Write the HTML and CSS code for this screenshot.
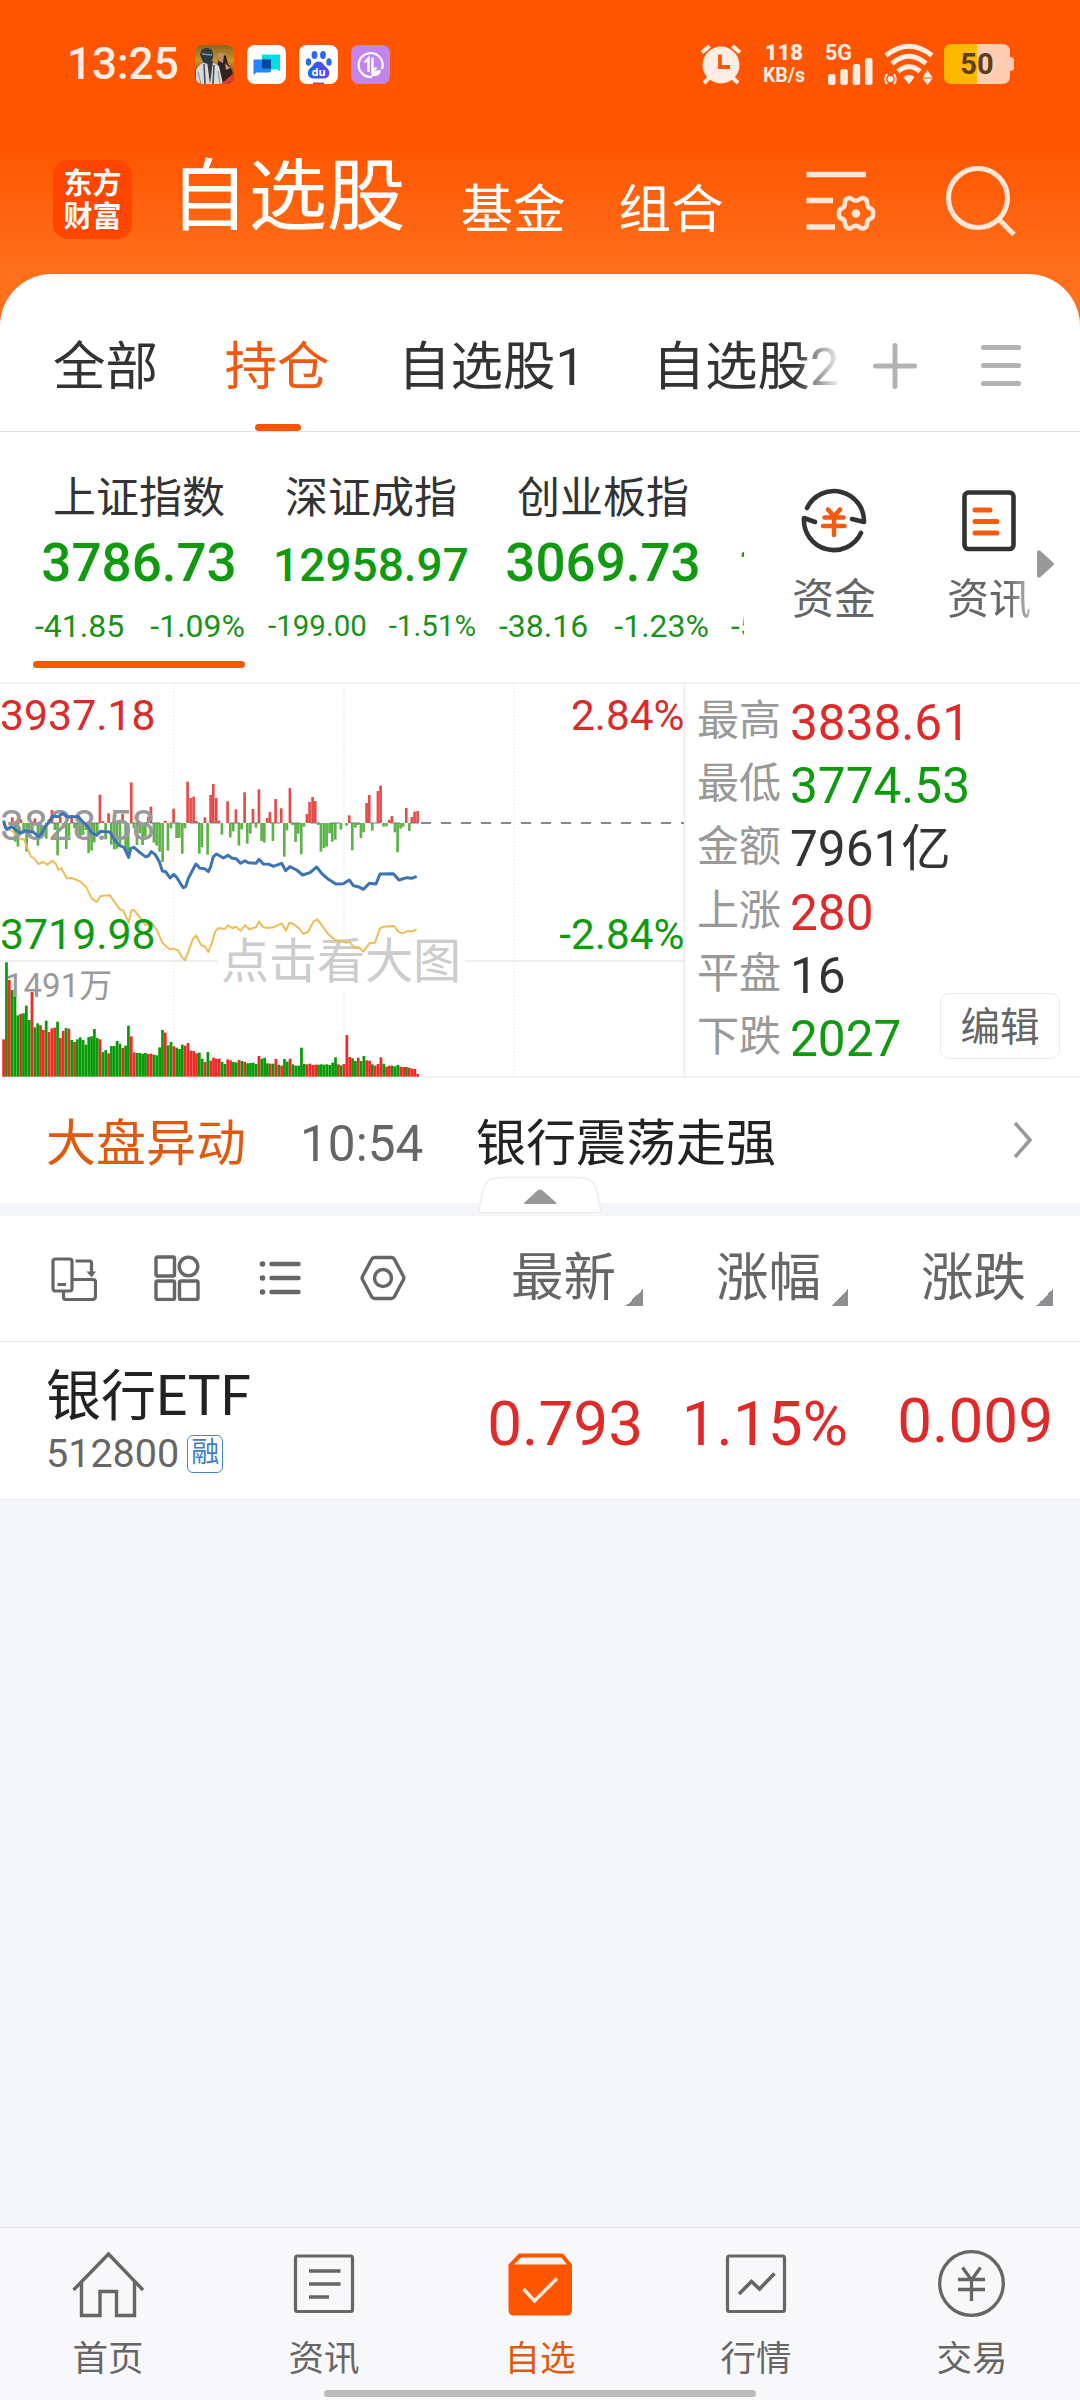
FILE: index.html
```html
<!DOCTYPE html>
<html lang="zh-CN">
<head>
<meta charset="utf-8">
<title>自选股</title>
<link rel="stylesheet" href="styles.css">
</head>
<body>
<div class="app">
  <header class="hero">
    <div class="status">
      <span class="clock">13:25</span>
      <div class="status-apps">
        <svg width="39" height="39" viewBox="0 0 39 39"><defs><clipPath id="r"><rect width="39" height="39" rx="8"/></clipPath><linearGradient id="gold" x1="0" y1="0" x2="0" y2="1"><stop offset="0" stop-color="#8a6420"/><stop offset=".4" stop-color="#c9942e"/><stop offset="1" stop-color="#3a2a1c"/></linearGradient></defs><g clip-path="url(#r)"><rect width="39" height="39" fill="url(#gold)"/><path d="M21 39l1-18 3-12 6 2 2 8 4 6 2 14z" fill="#33221b"/><path d="M23 9q4-4 6 1l-1 8-4-2z" fill="#c58b66"/><path d="M30 18l5 5-4 2z" fill="#d09a74"/><path d="M1 39V25q4-7 10-8 8 0 13 4l4 18z" fill="#d8dadc"/><path d="M9 19l1 20M19 20l-1 19" stroke="#4c5257" stroke-width="1.6"/><path d="M3 27l3 12M23 26l2 13" stroke="#868c90"/><path d="M12 16l3 23 3-23z" fill="#3a3a3c"/><path d="M5 10q1-8 8-7 6 1 5 10l-2 5q-5 2-8-1z" fill="#2f3a43"/><path d="M7 9l10 1" stroke="#8493a0" stroke-width="1.5"/><path d="M26 39l13-11v11z" fill="#e03a34"/></g></svg>
        <svg width="39" height="39" viewBox="0 0 39 39"><rect width="39" height="39" rx="8" fill="#fff"/><path d="M16 9.500h16q1 0 1 1V26l-3-1.500H16q-1 0-1-1v-13q0-1 1-1z" fill="#00dfe0"/><path d="M7 14.500h17v11q0 2-2 2H9.500L6.500 30V15q0-.5.5-.5z" fill="#1f86ff"/><path d="M15 14.500h9v9h-8q-1 0-1-1z" fill="#024696"/></svg>
        <svg width="39" height="39" viewBox="0 0 39 39"><defs><linearGradient id="du" x1="0" x2="1"><stop offset="0" stop-color="#1667f5"/><stop offset="1" stop-color="#6b42e8"/></linearGradient></defs><rect width="39" height="39" rx="8" fill="#fff"/><g fill="#2a69ec"><ellipse cx="15.500" cy="10" rx="2.900" ry="4"/><ellipse cx="24" cy="10" rx="2.900" ry="4"/><ellipse cx="9.500" cy="17" rx="2.700" ry="3.800"/><ellipse cx="30" cy="17" rx="2.700" ry="3.800"/></g><path d="M19.500 16.500c4 0 5 3.500 8 6 4 3 4.500 11-3 11H15c-7.500 0-7.500-8-3-11 3-2.500 3.500-6 7.500-6z" fill="url(#du)"/><text x="19.500" y="31" class="du">du</text><path d="M14 37.500h6V39h-6z" fill="#e33"/><path d="M20 37.500h5V39h-5z" fill="#36e"/></svg>
        <svg width="39" height="39" viewBox="0 0 39 39"><rect width="39" height="39" rx="8" fill="#c385eb"/><g fill="none" stroke="#fff" stroke-width="2.200"><path d="M21 32A12 12 0 1 1 31 24"/><path d="M13.500 17.500l4-4V27M21.500 12.500V26.500l4-4" stroke-width="2.400"/></g><path d="M20 32q0-7 10-7-1 7-8 6z" fill="#fff"/></svg>
      </div>
      <div class="status-sys">
        <svg width="42" height="42" viewBox="0 0 42 42"><g fill="none" stroke="#ffede4" stroke-width="4"><path d="M2 9.500L9.500 3M40 9.500L32.500 3M9 35l-5 5M33 35l5 5"/></g><circle cx="21" cy="22" r="18.500" fill="#ffede4"/><path d="M20 11.500V24h10" fill="none" stroke="#ff5500" stroke-width="3.800"/></svg>
        <div class="rate"><b>118</b><span>KB/s</span></div>
        <svg class="signal" width="50" height="50" viewBox="0 -4 50 50"><text x="-1" y="17" class="g5">5G</text><g fill="#ffede4"><rect x="2" y="31" width="7.500" height="11" rx="2.500"/><rect x="14.300" y="26" width="7.500" height="16" rx="2.500"/><rect x="26.700" y="21" width="7.500" height="21" rx="2.500"/><rect x="39" y="15" width="7.500" height="27" rx="2.500"/></g></svg>
        <svg class="wifi" width="50" height="42" viewBox="0 0 50 42"><g fill="none" stroke="#ffede4" stroke-width="5"><path d="M2 12.500Q25-6 48 12.500"/><path d="M8 20.500Q25 6 42 20.500"/><path d="M14 28.500Q25 19 36 28.500"/></g><path d="M19.500 34q5.500-4 11 0L25 41.500z" fill="#ffede4"/><path d="M38.500 34.500L43.500 27l5 7.500zM38.500 35.500h10L43.500 42z" fill="#ffede4"/><circle cx="6.500" cy="36" r="3" fill="#ffede4"/><path d="M3 31q-3.500 5 0 10M10 31q3.500 5 0 10" fill="none" stroke="#ffede4" stroke-width="2"/></svg>
        <svg width="70" height="40" viewBox="0 0 70 40"><path d="M8 0h25v40H8q-8 0-8-8V8q0-8 8-8z" fill="#ffb800"/><path d="M33 0h25q8 0 8 8v5q4 0 4 3v8q0 3-4 3v5q0 8-8 8H33z" fill="#ffcdb3"/><text x="33" y="30" class="battery">50</text></svg>
      </div>
    </div>
    <div class="topbar">
      <div class="logo">东方<br>财富</div>
      <nav class="sections"><span class="current">自选股</span><span>基金</span><span>组合</span></nav>
      <svg width="70" height="62" viewBox="806 168 70 62"><g fill="none" stroke="#ffe6d6" stroke-width="5.300"><path d="M806.500 173.500H866M806.500 199.500H833M806.500 226H835"/><path d="M847.500 197.500q2.500-1.500 5 1 3.500 2.500 7 0 2.500-2.500 5-1 3 1.500 2.500 4.500 0 4.500 3.500 5.500 3 1.500 2.500 5 .5 4-2.500 5-3.500 1-3.500 5 .5 3-2.500 4.500t-5-1q-3.500-2.500-7 0-2.500 2.500-5 1t-2.500-4.500q0-4-3.500-5-3-1-2.500-5-.5-3.500 2.500-5 3.500-1 3.500-5.500-.5-3 2.500-4.500z" stroke-width="4.500"/></g><circle cx="856" cy="212.500" r="4.200" fill="#ffe6d6"/></svg>
      <svg width="70" height="72" viewBox="946 162 70 72"><g fill="none" stroke="#ffe6d6" stroke-width="5"><circle cx="978" cy="196" r="29.500"/><path d="M998.500 217L1014 232.500"/></g></svg>
    </div>
  </header>

  <main class="sheet">
    <div class="tabs">
      <div class="tab-list"><span>全部</span><span class="on">持仓</span><span>自选股1</span><span>自选股2</span></div>
      <svg width="44" height="46" viewBox="0 0 44 46"><path d="M2.500 23H41.500M22 2.500V43.500" stroke="#b3b3b3" stroke-width="5" stroke-linecap="round"/></svg>
      <svg width="40" height="46" viewBox="0 0 40 46"><path d="M2.500 4.500H37.500M2.500 22.500H37.500M2.500 40.500H37.500" stroke="#b3b3b3" stroke-width="5.200" stroke-linecap="round"/></svg>
    </div>

    <section class="market">
      <div class="indices">
        <div class="index on"><span class="name">上证指数</span><span class="price">3786.73</span><span class="delta"><i>-41.85</i><i>-1.09%</i></span></div>
        <div class="index long"><span class="name">深证成指</span><span class="price"><b>12958.97</b></span><span class="delta"><i>-199.00</i><i>-1.51%</i></span></div>
        <div class="index"><span class="name">创业板指</span><span class="price">3069.73</span><span class="delta"><i>-38.16</i><i>-1.23%</i></span></div>
        <div class="index cut"><span class="name"></span><span class="price"><b>1</b></span><span class="delta"><i>-5</i></span></div>
      </div>
      <div class="shortcuts">
        <div class="shortcut"><svg width="66" height="66" viewBox="0 0 66 66"><g fill="none" stroke="#333" stroke-width="4.600" stroke-linecap="round" stroke-linejoin="round"><path d="M6 21A30 30 0 0 1 63 35L51 32"/><path d="M60 46A30 30 0 0 1 3 31L14 35"/></g><g stroke="#f55a10" stroke-width="4.500" stroke-linecap="round"><path d="M27 22.500l6 7 6-7M23.500 30.500H42.500M22 39H43.500M33 30V48" fill="none"/></g></svg><span>资金</span></div>
        <div class="shortcut last"><svg width="54" height="66" viewBox="0 0 54 66"><rect x="2.500" y="5.500" width="49" height="56.500" rx="4" fill="none" stroke="#333" stroke-width="4.600"/><path d="M13 23H28M13 34.500H35M13 46H35" stroke="#f55a10" stroke-width="5" stroke-linecap="round"/></svg><span>资讯</span></div>
        <svg class="more" width="17" height="28" viewBox="0 0 17 28"><path d="M0 2.500Q0-1 3.500 1L16 12.500q2 1.500 0 3L3.500 27Q0 29 0 25.500z" fill="#999"/></svg>
      </div>
    </section>

    <section class="quote">
      <svg class="chart" id="chart" width="686" height="393" viewBox="0 684 686 393">
        <g stroke="#eeeeef" stroke-width="1.500" fill="none"><path d="M174 684V1077M344 684V1077M514 684V1077" stroke-dasharray="1.500 2"/><path d="M0 961H684M684.500 683V1077" stroke-width="2"/></g>
        <rect x="217" y="935" width="248" height="55" fill="#fff"/>
        <path d="M421 823H684" stroke="#888" stroke-width="1.800" stroke-dasharray="10 10"/>
        <text x="221" y="978" class="t-mark">点击看大图</text>
        <g id="plot" transform="translate(0 670) scale(.33333)"></g>
        <text x="5" y="996.500" class="t-vol">1491万</text>
        <g class="t-axis"><text x="0" y="730" class="up">3937.18</text><text x="0" y="839.500" class="flat">3828.58</text><text x="0" y="948.500" class="down">3719.98</text><text x="684.500" y="730" class="up end">2.84%</text><text x="684.500" y="948.500" class="down end">-2.84%</text></g>
        <g id="lines" transform="translate(0 670) scale(.33333)"></g>
      </svg>
      <dl class="stats">
        <div><dt>最高</dt><dd class="up">3838.61</dd></div>
        <div><dt>最低</dt><dd class="down">3774.53</dd></div>
        <div><dt>金额</dt><dd>7961亿</dd></div>
        <div><dt>上涨</dt><dd class="up">280</dd></div>
        <div><dt>平盘</dt><dd>16</dd></div>
        <div><dt>下跌</dt><dd class="down">2027</dd></div>
        <button class="edit">编辑</button>
      </dl>
    </section>

    <section class="alert">
      <span class="kind">大盘异动</span><span class="time">10:54</span><span class="what">银行震荡走强</span>
      <svg width="20" height="38" viewBox="0 0 20 38"><path d="M2 2L17 19 2 36" fill="none" stroke="#999" stroke-width="3.600"/></svg>
      <svg class="fold" width="126" height="38" viewBox="0 0 126 38"><path d="M1.500 36.500L5.500 16Q8 1.500 24 1.500H102Q117 1.500 120 16L124.500 36.500z" fill="#fff" stroke="#ededf0" stroke-width="1.500"/><path d="M47.500 28q-1-1 .5-2L60.500 14.500q2.500-2 5 0L78.500 26q1.500 1.500 .5 2z" fill="#999"/></svg>
    </section>

    <section class="columns">
      <div class="tools">
        <svg width="46" height="46" viewBox="0 0 46 46"><g fill="none" stroke="#666" stroke-width="3.200"><rect x="2" y="4" width="19" height="32" rx="2.500"/><path d="M6.500 29.500H15M24.500 6H38.500q2 0 2 2V18M21 24.500H42q2.500 0 2.500 2.500V41q0 3.500-3.500 3.500H15q-2.500 0-2.500-2.500V36"/></g><path d="M35.500 16.500h9.500L40.500 22.500z" fill="#666"/></svg>
        <svg width="46" height="46" viewBox="0 0 46 46"><g fill="none" stroke="#666" stroke-width="3.400"><rect x="2" y="2" width="18.500" height="19" rx="1.500"/><circle cx="34.500" cy="11.500" r="9.300"/><rect x="2" y="26" width="18.500" height="18.500" rx="1.500"/><rect x="25.500" y="26" width="18.500" height="18.500" rx="1.500"/></g></svg>
        <svg width="46" height="46" viewBox="-2.500 0 46 46"><path d="M12 9H39M12 23H39M12 37H39" stroke="#666" stroke-width="4.500" stroke-linecap="round"/><g fill="#666"><circle cx="3" cy="9" r="2.800"/><circle cx="3" cy="23" r="2.800"/><circle cx="3" cy="37" r="2.800"/></g></svg>
        <svg width="46" height="46" viewBox="0 0 46 46"><g fill="none" stroke="#666" stroke-width="3.400"><path d="M14.500 2.500H31.500Q33.500 2.500 34.500 4.500L43.500 21.500Q44.300 23 43.500 24.500L34.500 41.500Q33.500 43.500 31.500 43.500H14.500Q12.500 43.500 11.500 41.500L2.500 24.500Q1.700 23 2.500 21.500L11.500 4.500Q12.500 2.500 14.500 2.500z"/><circle cx="23" cy="23" r="8.500"/></g></svg>
      </div>
      <span class="sort">最新</span><span class="sort">涨幅</span><span class="sort">涨跌</span>
    </section>

    <section class="stock">
      <div class="ident"><span class="title">银行ETF</span><span class="code">512800<em>融</em></span></div>
      <span class="val">0.793</span><span class="val">1.15%</span><span class="val high">0.009</span>
    </section>
  </main>

  <footer class="nav">
    <div class="item"><svg width="72" height="70" viewBox="72 2250 72 70"><path d="M73.500 2290L108.500 2254 143 2290M81.500 2282V2315.500H100V2291.500H116.500V2315.500H134.500V2282" fill="none" stroke="#666" stroke-width="3.400"/></svg><span>首页</span></div>
    <div class="item"><svg width="72" height="70" viewBox="288 2250 72 70"><rect x="295.500" y="2256" width="57" height="55.500" rx="2" fill="none" stroke="#666" stroke-width="3.200"/><path d="M309 2271H340.500M309 2284H340.500M309 2297H329" stroke="#666" stroke-width="3.400"/></svg><span>资讯</span></div>
    <div class="item on"><svg width="72" height="70" viewBox="504 2250 72 70"><path d="M519 2253.500H563L572 2264.500V2310q0 5.500-5.500 5.500H514q-5.500 0-5.500-5.500V2264.500z" fill="#ff5500"/><path d="M521 2257.500H561.500L567 2264.500H514z" fill="#fdf3ee"/><path d="M523.500 2289L534.500 2301 557 2278.500" fill="none" stroke="#ffe9dd" stroke-width="3.500"/></svg><span>自选</span></div>
    <div class="item"><svg width="72" height="70" viewBox="720 2250 72 70"><rect x="727.500" y="2256" width="57" height="55.500" rx="2" fill="none" stroke="#666" stroke-width="3.200"/><path d="M739 2294L751.500 2281.500 759.500 2289 774.500 2273.500" fill="none" stroke="#666" stroke-width="3.600"/></svg><span>行情</span></div>
    <div class="item"><svg width="72" height="70" viewBox="936 2250 72 70"><g fill="none" stroke="#666" stroke-width="3.300"><circle cx="971.500" cy="2283.500" r="31.800"/><path d="M962.500 2267.500L971.500 2280 980.500 2267.500M958 2279.500H985M958 2289.500H985M971.500 2279V2301"/></g></svg><span>交易</span></div>
    <i class="gesture"></i>
  </footer>
</div>
<script src="chart.js"></script>
</body>
</html>
```
FILE: styles.css
```css
* { box-sizing: border-box; }
body { margin: 0; font-family: Roboto, "Noto Sans CJK SC", sans-serif; color: #333; background: #f6f7fa; }
svg { display: block; flex: none; }
i, em { font-style: normal; }
.app { width: 1080px; height: 2400px; display: flex; flex-direction: column; overflow: hidden; }
.up { color: #e02a2a; fill: #d92b2b; }
.down { color: #109a10; fill: #109a10; }
.flat { fill: #999; }

.hero { height: 334px; flex: none; background: linear-gradient(#ff5500 0, #ff5500 145px, #ff6e1a 265px, #ff6e1a 100%); }
.status { height: 128px; padding: 0 66px 0 66px; display: flex; align-items: center; color: #ffede4; }
.clock { font-size: 44px; font-weight: 500; line-height: 50px; width: 129px; padding-left: 1px; }
.status-apps { display: flex; gap: 13px; }
.du { font: 700 11px "Noto Sans", sans-serif; fill: #fff; text-anchor: middle; }
.status-sys { margin-left: auto; display: flex; align-items: center; }
.rate { display: flex; flex-direction: column; align-items: center; width: 44px; margin-left: 20px; margin-right: 20px; font-weight: 700; font-size: 19.500px; line-height: 22px; }
.rate b { font-size: 22px; line-height: 24px; }
.signal { margin-right: 8px; }
.wifi { margin-right: 10px; }
.g5 { font: 700 21.500px Roboto, sans-serif; fill: #ffede4; }
.battery { font: 700 29px Roboto, sans-serif; fill: #57401a; text-anchor: middle; }

.topbar { height: 143px; padding: 0 64px 0 53px; display: flex; align-items: center; }
.topbar > svg + svg { margin-left: 70px; }
.logo { width: 79px; height: 79px; border-radius: 15px; background: #ff4500; color: #fff; font-size: 29px; font-weight: 700; line-height: 32.500px; text-align: center; padding-top: 8px; }
.sections { display: flex; align-items: baseline; margin: 4px auto 0 38px; gap: 53px; color: #fff; font-size: 52.500px; line-height: 80px; }
.sections span { transform: translateY(4px); }
.sections .current { font-size: 78.500px; margin-right: 2px; transform: none; }

.sheet { margin-top: -60px; background: #fff; border-radius: 52px 52px 0 0; border-bottom: 1px solid #ececec; }
.tabs { height: 158px; display: flex; align-items: center; border-bottom: 1px solid #e3e3e3; padding-right: 59px; }
.tab-list { display: flex; gap: 67.500px; width: 842px; height: 157px; padding: 30px 0 0 53px; margin-right: 31px; overflow: hidden; font-size: 52.500px; line-height: 126px; white-space: nowrap; -webkit-mask: linear-gradient(90deg, #000 795px, transparent 842px); mask: linear-gradient(90deg, #000 795px, transparent 842px); }
.tabs > svg + svg { margin-left: 64px; }
.tabs > svg { margin-top: 26px; }
.tab-list .on { color: #f0590f; position: relative; margin-left: -1px; margin-right: 1px; }
.tab-list .on::after { content: ""; position: absolute; left: 30px; bottom: 0; width: 46px; height: 7px; border-radius: 4px; background: #f55606; }

.market { height: 250px; display: flex; }
.indices { width: 744px; flex: none; padding: 36px 0 0 33px; display: flex; gap: 20px; overflow: hidden; }
.index { width: 212px; height: 201px; flex: none; display: flex; flex-direction: column; }
.name { height: 60px; line-height: 60px; font-size: 43px; text-align: center; }
.price { margin-top: 5px; line-height: 60px; font-size: 53px; font-weight: 500; color: #109a10; text-align: center; }
.price b { font-size: 46px; font-weight: 500; line-height: 1; }
.delta { margin-top: 13px; line-height: 40px; font-size: 32px; color: #1a921a; display: flex; justify-content: space-between; padding: 0 0 0 2px; }
.long .delta { font-size: 29.500px; padding: 1px 1px 0 3px; line-height: 39px; }
.index.on::after { content: ""; height: 7px; margin-top: 15px; border-radius: 4px; background: #f95804; }
.cut .price { text-align: left; padding-left: 9px; }
.shortcuts { flex: 1; display: flex; padding: 55px 26px 0 48px; }
.shortcut { width: 84px; display: flex; flex-direction: column; align-items: center; font-size: 42px; line-height: 60px; color: #666; }
.shortcut span { margin-top: 17px; white-space: nowrap; }
.last { margin-left: 71px; }
.last span { -webkit-mask: linear-gradient(90deg, #000 60px, rgba(0,0,0,.45)); mask: linear-gradient(90deg, #000 60px, rgba(0,0,0,.45)); }
.more { margin: 63px 0 0 6px; }

.quote { height: 396px; display: flex; border-top: 2px solid #f3f3f4; border-bottom: 2px solid #f3f3f4; }
.t-mark { font-size: 48px; fill: #ccc; }
.t-vol { font-size: 33px; fill: #999; }
.t-axis { font-size: 42.800px; }
.end { text-anchor: end; font-size: 42.300px; }
.stats { position: relative; margin: 0; padding: 5px 0 0 11px; flex: 1; }
.stats div { display: flex; height: 63.300px; align-items: center; gap: 9px; }
dt { font-size: 42px; color: #999; line-height: 60px; }
dd { margin: 0; font-size: 49.500px; line-height: 60px; padding-top: 4px; }
.edit { position: absolute; right: 20px; bottom: 17px; width: 120px; height: 66px; padding: 4px 0 0; border: 1.500px solid #ebebeb; border-radius: 9px; background: #fff; font: 39.500px/60px Roboto, "Noto Sans CJK SC", sans-serif; color: #666; }

.alert { position: relative; height: 138px; border-bottom: 13px solid #f5f6f9; display: flex; align-items: center; padding: 6px 47px 0 46px; font-size: 50px; line-height: 60px; color: #222; }
.kind { color: #e0590f; width: 254px; }
.time { color: #666; width: 176px; font-size: 49.500px; }
.what { margin-right: auto; }
.alert > svg:not(.fold) { margin-top: -8px; }
.fold { position: absolute; left: 477px; bottom: -11px; }

.columns { height: 126px; display: flex; align-items: center; border-bottom: 1px solid #ebebeb; padding-right: 27px; }
.tools { display: flex; gap: 57px; margin: -2px auto 0 51px; }
.sort { width: 205px; height: 125px; position: relative; padding-left: 73px; font-size: 52.500px; line-height: 125px; color: #666; }
.sort::after { content: ""; position: absolute; right: 0; bottom: 35px; border: solid transparent; border-width: 17px 0 0 17px; width: 0; height: 0; background: linear-gradient(135deg, transparent 50%, #8e8e93 50%) border-box; }

.stock { height: 157px; display: flex; padding-right: 27px; }
.ident { display: flex; flex-direction: column; margin-right: auto; padding: 24px 0 0 46px; }
.title { font-size: 55px; line-height: 60px; color: #222; }
.code { display: flex; align-items: center; margin-top: 0; font-size: 39.500px; line-height: 56px; color: #666; }
.code em { margin-left: 8px; width: 36px; height: 38px; border: 1.500px solid #4a86c6; border-radius: 6px; font-size: 28px; line-height: 34px; text-align: center; color: #3c7fc6; }
.val { width: 205px; text-align: right; font-size: 62px; line-height: 164px; color: #e02a2a; }
.val.high { line-height: 158px; }

.nav { position: relative; margin-top: auto; height: 173px; flex: none; border-top: 1px solid #e2e2e4; background: #f8f8fa; display: flex; }
.item { width: 216px; padding-top: 22px; display: flex; flex-direction: column; align-items: center; font-size: 35.500px; line-height: 50px; color: #666; }
.item span { margin-top: 14px; }
.item.on { color: #e0590f; }
.gesture { position: absolute; left: 324px; bottom: 3px; width: 432px; height: 7px; border-radius: 4px; background: #bbb; }
```
FILE: chart.js
```javascript
const NS = 'http://www.w3.org/2000/svg';
const RED = '#ee2a26', GREEN = '#079b07';
const STEP = 8.51, FIRST = 11, ZERO = 459, FLOOR = 1220;

// Per-minute strength: [x, y] of each bar tip, measured from the zero line.
const rise = [[37,442],[63,448],[105,445],[147,448],[156,420],[181,440],[215,435],[300,374],[309,453],[326,430],[368,432],[394,337],[445,440],[453,410],[496,452],[521,416],[563,335],[572,384],[581,380],[589,453],[615,442],[632,375],[640,342],[649,384],[657,452],[683,394],[708,418],[734,367],[759,417],[777,358],[802,444],[810,426],[827,387],[844,415],[870,354],[921,432],[929,396],[938,381],[946,393],[1048,436],[1100,399],[1108,375],[1134,363],[1142,347],[1168,450],[1176,438],[1219,414],[1236,441],[1244,425],[1253,423]];
const fall = [[46,515],[54,530],[71,490],[80,545],[88,480],[97,490],[114,527],[122,500],[139,506],[165,480],[173,556],[190,475],[199,537],[207,500],[224,475],[232,490],[241,500],[249,495],[258,480],[266,549],[275,542],[283,517],[292,490],[317,508],[334,524],[343,538],[351,536],[360,530],[377,540],[385,552],[402,475],[411,525],[419,490],[428,525],[436,500],[462,518],[470,527],[479,545],[488,576],[504,542],[513,475],[530,504],[538,504],[547,551],[555,475],[598,551],[606,532],[623,554],[666,494],[691,502],[700,484],[717,527],[725,478],[742,521],[751,491],[768,473],[785,513],[793,518],[819,513],[853,560],[861,481],[878,465],[887,516],[895,491],[904,553],[912,470],[955,465],[963,545],[972,534],[980,530],[989,490],[997,515],[1006,509],[1023,479],[1040,467],[1057,541],[1066,473],[1074,465],[1083,504],[1091,487],[1117,482],[1151,470],[1160,469],[1185,487],[1193,547],[1202,476],[1210,470],[1228,483]];

// Volume bar tops, one per minute, with the colour of the bar.
const volume = 'r1108 g877 r930 g960 g978 g1036 r1032 g1030 g1007 g1050 r966 g1072 g1060 r1066 r1080 g1052 r1086 r1075 r1073 g1055 r1104 r1083 g1074 r1076 g1110 r1116 g1108 g1102 g1110 g1124 g1101 g1099 g1077 g1104 r1108 g1146 g1140 r1150 g1128 g1128 g1113 g1121 r1134 g1127 g1067 r1099 r1147 g1149 g1149 g1151 g1149 r1152 r1151 g1154 g1156 g1132 g1080 r1088 g1126 g1116 r1129 g1133 g1137 g1124 r1127 r1119 r1142 r1143 r1150 g1148 g1166 r1176 g1146 r1172 r1163 r1166 r1166 g1176 g1182 r1168 r1171 g1176 g1177 r1170 g1173 r1176 g1180 g1179 g1178 g1182 r1158 g1166 g1163 g1180 r1181 g1181 r1167 g1184 r1187 g1167 g1175 r1166 g1183 g1187 g1187 g1133 g1182 r1183 r1181 r1185 r1184 g1184 g1183 g1184 g1183 g1185 g1178 g1162 r1183 g1186 r1182 r1095 r1161 g1165 g1173 r1163 g1173 g1158 r1171 r1172 g1183 r1187 r1182 r1162 g1181 r1190 r1187 g1187 g1189 g1185 r1190 r1191 g1191 r1193 r1196 r1197 r1212'.split(' ');

const index = '11,452 15,470 20,478 35,470 50,482 62,490 75,482 100,486 115,500 125,490 135,470 148,455 158,438 175,440 188,430 200,440 235,440 248,455 262,468 275,488 290,496 302,484 330,486 345,512 358,526 372,532 386,562 392,535 402,532 420,548 436,560 445,558 454,545 466,554 478,575 487,603 497,605 510,624 521,613 530,622 541,640 550,653 557,650 565,625 578,600 588,582 600,595 614,596 625,605 632,590 640,560 650,552 670,564 684,556 695,564 708,566 722,580 735,572 745,578 768,580 777,568 790,582 808,583 820,589 845,580 857,602 870,590 890,600 908,615 930,608 950,591 965,610 985,628 1008,642 1030,641 1048,630 1060,647 1075,650 1090,658 1108,640 1128,642 1140,612 1180,611 1197,630 1220,623 1235,625 1250,619';
const average = '11,455 25,478 40,485 50,500 60,506 72,508 82,535 93,560 103,566 116,582 130,576 142,584 158,572 168,582 175,600 184,594 200,625 215,624 240,634 258,650 275,685 290,696 302,678 330,676 345,698 360,718 370,722 386,758 394,722 402,720 420,742 436,765 455,758 470,780 487,818 500,830 510,838 521,836 535,842 545,860 555,871 565,845 578,808 588,796 603,825 615,830 625,846 635,820 645,785 655,775 675,776 684,766 698,775 708,770 722,782 735,766 748,778 768,772 777,754 788,770 800,774 820,772 845,760 858,782 868,758 880,762 897,775 910,792 925,785 940,755 952,748 965,765 985,793 1005,810 1040,818 1048,815 1060,830 1080,835 1090,845 1108,820 1125,818 1140,775 1150,770 1182,768 1195,785 1205,790 1220,784 1235,784 1250,778';

function add(parent, tag, attrs) {
  const el = document.createElementNS(NS, tag);
  for (const key in attrs) el.setAttribute(key, attrs[key]);
  parent.appendChild(el);
}

const plot = document.getElementById('plot');
const lines = document.getElementById('lines');
for (const [x, y] of rise) add(plot, 'rect', { x: x - 4.2, y, width: 8, height: ZERO - y, fill: '#e64b48' });
for (const [x, y] of fall) add(plot, 'rect', { x: x - 4.2, y: ZERO, width: 8, height: y - ZERO, fill: '#5db348' });
add(plot, 'path', { d: `M30 ${ZERO}H1256`, stroke: '#777', 'stroke-width': 3, 'stroke-dasharray': '30 30' });
volume.forEach((bar, i) => {
  const y = +bar.slice(1);
  add(plot, 'rect', { x: FIRST + i * STEP - 4.2, y, width: 8.2, height: FLOOR - y, fill: bar[0] === 'r' ? RED : GREEN });
});
add(plot, 'polyline', { points: average, fill: 'none', stroke: '#efbd58', 'stroke-width': 6, 'stroke-linejoin': 'round' });
add(lines, 'polyline', { points: index, fill: 'none', stroke: '#3c74b4', 'stroke-width': 9, 'stroke-linejoin': 'round' });
```
